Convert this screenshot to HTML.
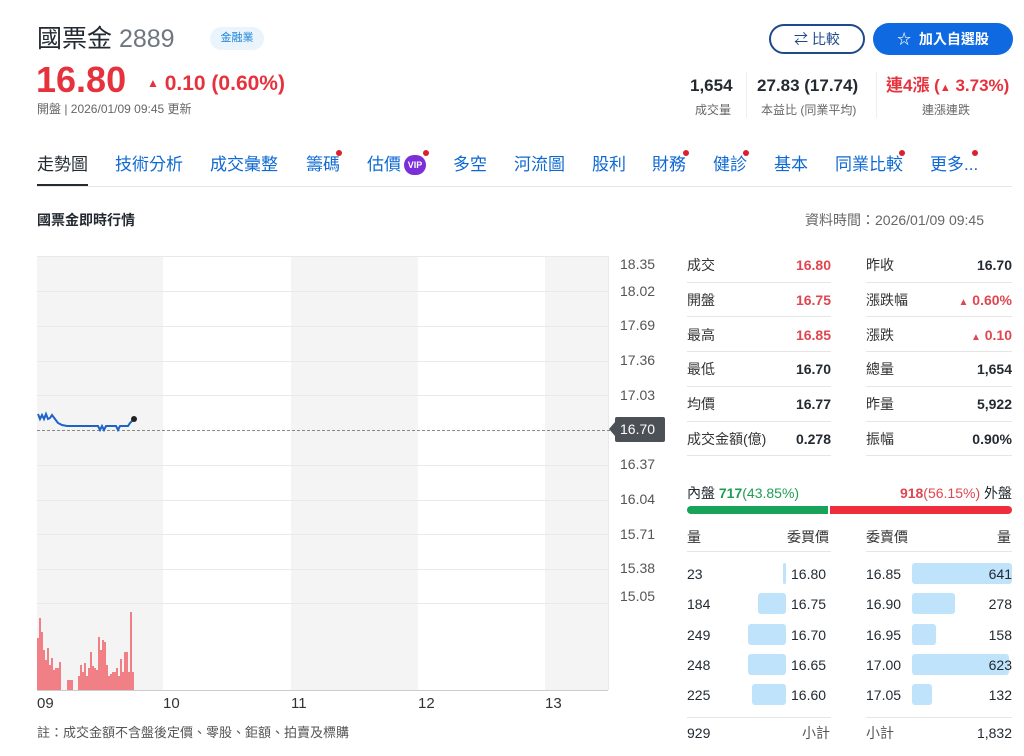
<!DOCTYPE html>
<html><head><meta charset="utf-8"><style>
*{margin:0;padding:0;box-sizing:border-box}
body{width:1024px;height:756px;background:#fff;font-family:"Liberation Sans","Noto Sans CJK TC",sans-serif;color:#232a31;position:relative;overflow:hidden}
.a{position:absolute;white-space:nowrap}
.rd{color:#e0464f}
.nav{color:#0f69d2;font-size:17px;top:153px;line-height:24px}
.dot{position:absolute;width:6px;height:6px;border-radius:3px;background:#d9212f}
.row{position:relative;height:34.8px;line-height:20px}
.lbl{font-size:14px;color:#333;line-height:20px}
.val{font-size:14px;font-weight:bold;text-align:right;line-height:20px}
.yl{font-size:14px;color:#555;left:620px;line-height:18px}
.sep{position:absolute;height:1px;background:#e6e6e6}
.bar{position:absolute;background:#bfe3fb;border-radius:3px}
.ob{font-size:14px;line-height:30.3px}
</style></head><body>
<div class="a" style="left:37px;top:22px;font-size:25px;line-height:34px;color:#232a31">國票金 <span style="color:#6e7780">2889</span></div>
<div class="a" style="left:210px;top:27px;width:54px;height:23px;border-radius:12px;background:#eaf4fd;color:#1b83d4;font-size:11px;text-align:center;line-height:23px">金融業</div>
<div class="a" style="left:36px;top:59px;font-size:36px;line-height:42px;font-weight:bold;color:#e5323c">16.80</div>
<div class="a" style="left:147px;top:70px;font-size:21px;line-height:28px;font-weight:bold;color:#e5323c"><span style="font-size:12px;position:relative;top:-3px">▲</span> 0.10 (0.60%)</div>
<div class="a" style="left:37px;top:101px;font-size:12px;line-height:16px;color:#666">開盤 | 2026/01/09 09:45 更新</div>

<div class="a" style="left:769px;top:24px;width:96px;height:30px;border:2px solid #1f4a8a;border-radius:16px;color:#1f4a8a;font-size:14px;line-height:26px;text-align:center">⇄ 比較</div>
<div class="a" style="left:873px;top:23px;width:140px;height:32px;border-radius:16px;background:#0f69e0;color:#fff;font-size:14px;font-weight:bold;line-height:32px;text-align:center">☆ &nbsp;加入自選股</div>

<div class="a" style="left:690px;top:75px;font-size:17px;line-height:22px;font-weight:bold">1,654</div>
<div class="a" style="left:695px;top:102px;font-size:12px;line-height:16px;color:#666">成交量</div>
<div class="a" style="left:746px;top:72px;width:1px;height:46px;background:#eee"></div>
<div class="a" style="left:757px;top:75px;font-size:17px;line-height:22px;font-weight:bold">27.83 (17.74)</div>
<div class="a" style="left:761px;top:102px;font-size:12px;line-height:16px;color:#666">本益比 (同業平均)</div>
<div class="a" style="left:876px;top:72px;width:1px;height:46px;background:#eee"></div>
<div class="a" style="left:886px;top:75px;font-size:17px;line-height:22px;font-weight:bold;color:#e5323c">連4漲 (<span style="font-size:11px">▲</span> 3.73%)</div>
<div class="a" style="left:922px;top:102px;font-size:12px;line-height:16px;color:#666">連漲連跌</div>

<div class="a nav" style="left:37px;color:#232a31">走勢圖</div>
<div class="a" style="left:37px;top:184px;width:51px;height:3px;background:#232a31"></div>
<div class="a" style="left:37px;top:186px;width:975px;height:1px;background:#e6e6e6"></div>
<div class="a nav" style="left:115px">技術分析</div>
<div class="a nav" style="left:210px">成交彙整</div>
<div class="a nav" style="left:306px">籌碼</div><div class="dot" style="left:336px;top:150px"></div>
<div class="a nav" style="left:367px">估價</div><div class="a" style="left:404px;top:155px;width:22px;height:20px;border-radius:10px;background:#7b2fd6;color:#fff;font-size:9px;font-weight:bold;line-height:20px;text-align:center">VIP</div><div class="dot" style="left:423px;top:150px"></div>
<div class="a nav" style="left:453px">多空</div>
<div class="a nav" style="left:514px">河流圖</div>
<div class="a nav" style="left:592px">股利</div>
<div class="a nav" style="left:652px">財務</div><div class="dot" style="left:683px;top:150px"></div>
<div class="a nav" style="left:713px">健診</div><div class="dot" style="left:743px;top:150px"></div>
<div class="a nav" style="left:774px">基本</div>
<div class="a nav" style="left:835px">同業比較</div><div class="dot" style="left:899px;top:150px"></div>
<div class="a nav" style="left:930px">更多...</div><div class="dot" style="left:972px;top:150px"></div>

<div class="a" style="left:37px;top:210px;font-size:14px;line-height:20px;font-weight:bold">國票金即時行情</div>
<div class="a" style="left:805px;top:210px;font-size:14px;line-height:20px;color:#666">資料時間：2026/01/09 09:45</div>

<svg class="a" style="left:0;top:240px" width="612" height="460">
<rect x="37" y="16" width="126" height="434" fill="#f4f4f4"/>
<rect x="291" y="16" width="127" height="434" fill="#f4f4f4"/>
<rect x="545" y="16" width="63" height="434" fill="#f4f4f4"/>
<g stroke="#e9e9e9" stroke-width="1">
<line x1="37" x2="608" y1="16.5" y2="16.5"/><line x1="37" x2="608" y1="51.5" y2="51.5"/><line x1="37" x2="608" y1="86.5" y2="86.5"/><line x1="37" x2="608" y1="121.5" y2="121.5"/><line x1="37" x2="608" y1="155.5" y2="155.5"/><line x1="37" x2="608" y1="225.5" y2="225.5"/><line x1="37" x2="608" y1="260.5" y2="260.5"/><line x1="37" x2="608" y1="294.5" y2="294.5"/><line x1="37" x2="608" y1="329.5" y2="329.5"/><line x1="37" x2="608" y1="363.5" y2="363.5"/>
<line x1="608.5" x2="608.5" y1="16" y2="450"/>
</g>
<line x1="37" x2="608" y1="450.5" y2="450.5" stroke="#ccc"/>
<line x1="37" x2="612" y1="190.5" y2="190.5" stroke="#888" stroke-dasharray="3,2"/>
<polyline fill="none" stroke="#1e63c8" stroke-width="2" points="38,174 40,179 42,175 44,179 46,174 48,179 50,178 52,175 55,179 58,183 62,185 67,186 98,186 100,190 102,186 104,190 106,186 116,186 118,190 120,186 128,186 130,183 134,179"/>
<circle cx="134" cy="179" r="3" fill="#222"/>
<g fill="#f07f86">
<rect x="37" y="398" width="2" height="52"/><rect x="39" y="378" width="2" height="72"/><rect x="41" y="392" width="2" height="58"/><rect x="43" y="410" width="2" height="40"/><rect x="45" y="420" width="2" height="30"/><rect x="47" y="408" width="2" height="42"/><rect x="49" y="425" width="2" height="25"/><rect x="51" y="418" width="2" height="32"/><rect x="53" y="430" width="2" height="20"/><rect x="55" y="428" width="2" height="22"/><rect x="57" y="428" width="2" height="22"/><rect x="59" y="422" width="2" height="28"/>
<rect x="67" y="440" width="6" height="10"/>
<rect x="78" y="436" width="2" height="14"/><rect x="80" y="425" width="2" height="25"/><rect x="82" y="432" width="2" height="18"/><rect x="84" y="423" width="2" height="27"/><rect x="86" y="436" width="2" height="14"/><rect x="88" y="428" width="2" height="22"/><rect x="90" y="412" width="2" height="38"/><rect x="92" y="426" width="2" height="24"/><rect x="94" y="428" width="2" height="22"/><rect x="96" y="430" width="2" height="20"/><rect x="98" y="397" width="2" height="53"/><rect x="100" y="410" width="2" height="40"/><rect x="102" y="400" width="2" height="50"/><rect x="104" y="402" width="2" height="48"/><rect x="106" y="425" width="2" height="25"/><rect x="108" y="436" width="2" height="14"/><rect x="110" y="434" width="2" height="16"/><rect x="112" y="432" width="2" height="18"/><rect x="114" y="432" width="2" height="18"/><rect x="116" y="428" width="2" height="22"/><rect x="118" y="436" width="2" height="14"/><rect x="120" y="419" width="2" height="31"/><rect x="122" y="432" width="2" height="18"/><rect x="124" y="412" width="2" height="38"/><rect x="126" y="412" width="2" height="38"/><rect x="128" y="432" width="2" height="18"/><rect x="130" y="372" width="2" height="78"/><rect x="132" y="432" width="2" height="18"/>
</g>
</svg>
<div class="a" style="left:37px;top:694px;font-size:15px;line-height:20px;color:#333">09</div>
<div class="a" style="left:163px;top:694px;font-size:15px;line-height:20px;color:#333">10</div>
<div class="a" style="left:291px;top:694px;font-size:15px;line-height:20px;color:#333">11</div>
<div class="a" style="left:418px;top:694px;font-size:15px;line-height:20px;color:#333">12</div>
<div class="a" style="left:545px;top:694px;font-size:15px;line-height:20px;color:#333">13</div>
<div class="a" style="left:37px;top:724px;font-size:13px;line-height:18px;color:#555">註：成交金額不含盤後定價、零股、鉅額、拍賣及標購</div>

<div class="a yl" style="top:255px">18.35</div>
<div class="a yl" style="top:282px">18.02</div>
<div class="a yl" style="top:316px">17.69</div>
<div class="a yl" style="top:351px">17.36</div>
<div class="a yl" style="top:386px">17.03</div>
<div class="a" style="left:609px;top:422px;width:0;height:0;border-top:7px solid transparent;border-bottom:7px solid transparent;border-right:6px solid #4b5157"></div>
<div class="a" style="left:615px;top:417px;width:50px;height:25px;background:#4b5157;color:#fff;font-size:14px;line-height:25px;padding-left:5px;border-radius:2px">16.70</div>
<div class="a yl" style="top:455px">16.37</div>
<div class="a yl" style="top:490px">16.04</div>
<div class="a yl" style="top:525px">15.71</div>
<div class="a yl" style="top:559px">15.38</div>
<div class="a yl" style="top:587px">15.05</div>

<div class="a" style="left:687px;top:255px;width:144px">
<div class="row"><span class="a lbl" style="left:0;top:0">成交</span><span class="a val rd" style="right:0;top:0">16.80</span></div>
<div class="row"><span class="a lbl" style="left:0;top:0">開盤</span><span class="a val rd" style="right:0;top:0">16.75</span></div>
<div class="row"><span class="a lbl" style="left:0;top:0">最高</span><span class="a val rd" style="right:0;top:0">16.85</span></div>
<div class="row"><span class="a lbl" style="left:0;top:0">最低</span><span class="a val" style="right:0;top:0">16.70</span></div>
<div class="row"><span class="a lbl" style="left:0;top:0">均價</span><span class="a val" style="right:0;top:0">16.77</span></div>
<div class="row"><span class="a lbl" style="left:0;top:0">成交金額(億)</span><span class="a val" style="right:0;top:0">0.278</span></div>
</div>
<div class="a" style="left:866px;top:255px;width:146px">
<div class="row"><span class="a lbl" style="left:0;top:0">昨收</span><span class="a val" style="right:0;top:0">16.70</span></div>
<div class="row"><span class="a lbl" style="left:0;top:0">漲跌幅</span><span class="a val rd" style="right:0;top:0"><span style="font-size:10px">▲</span> 0.60%</span></div>
<div class="row"><span class="a lbl" style="left:0;top:0">漲跌</span><span class="a val rd" style="right:0;top:0"><span style="font-size:10px">▲</span> 0.10</span></div>
<div class="row"><span class="a lbl" style="left:0;top:0">總量</span><span class="a val" style="right:0;top:0">1,654</span></div>
<div class="row"><span class="a lbl" style="left:0;top:0">昨量</span><span class="a val" style="right:0;top:0">5,922</span></div>
<div class="row"><span class="a lbl" style="left:0;top:0">振幅</span><span class="a val" style="right:0;top:0">0.90%</span></div>
</div>
<div class="sep" style="left:687px;top:282px;width:144px"></div><div class="sep" style="left:866px;top:282px;width:146px"></div>
<div class="sep" style="left:687px;top:316px;width:144px"></div><div class="sep" style="left:866px;top:316px;width:146px"></div>
<div class="sep" style="left:687px;top:351px;width:144px"></div><div class="sep" style="left:866px;top:351px;width:146px"></div>
<div class="sep" style="left:687px;top:386px;width:144px"></div><div class="sep" style="left:866px;top:386px;width:146px"></div>
<div class="sep" style="left:687px;top:421px;width:144px"></div><div class="sep" style="left:866px;top:421px;width:146px"></div>
<div class="sep" style="left:687px;top:455px;width:144px"></div><div class="sep" style="left:866px;top:455px;width:146px"></div>

<div class="a" style="left:687px;top:483px;font-size:14px;line-height:20px">內盤 <b style="color:#1f9d55">717</b><span style="color:#1f9d55">(43.85%)</span></div>
<div class="a" style="right:12px;top:483px;font-size:14px;line-height:20px"><b class="rd">918</b><span class="rd">(56.15%)</span> 外盤</div>
<div class="a" style="left:687px;top:506px;width:141px;height:8px;background:#17a45a;border-radius:4px 0 0 4px"></div>
<div class="a" style="left:830px;top:506px;width:182px;height:8px;background:#ee2e3c;border-radius:0 4px 4px 0"></div>

<div class="a lbl" style="left:687px;top:527px">量</div>
<div class="a lbl" style="left:787px;top:527px">委買價</div>
<div class="a lbl" style="left:866px;top:527px">委賣價</div>
<div class="a lbl" style="left:997px;top:527px">量</div>
<div class="sep" style="left:687px;top:551px;width:144px"></div><div class="sep" style="left:866px;top:551px;width:146px"></div>

<div class="bar" style="left:783px;top:563px;width:3px;height:21px"></div>
<div class="bar" style="left:758px;top:593px;width:28px;height:21px"></div>
<div class="bar" style="left:748px;top:624px;width:38px;height:21px"></div>
<div class="bar" style="left:748px;top:654px;width:38px;height:21px"></div>
<div class="bar" style="left:752px;top:684px;width:34px;height:21px"></div>
<div class="bar" style="left:912px;top:563px;width:100px;height:21px"></div>
<div class="bar" style="left:912px;top:593px;width:43px;height:21px"></div>
<div class="bar" style="left:912px;top:624px;width:24px;height:21px"></div>
<div class="bar" style="left:912px;top:654px;width:97px;height:21px"></div>
<div class="bar" style="left:912px;top:684px;width:20px;height:21px"></div>

<div class="a ob" style="left:687px;top:559px">23<br>184<br>249<br>248<br>225</div>
<div class="a ob" style="left:791px;top:559px">16.80<br>16.75<br>16.70<br>16.65<br>16.60</div>
<div class="a ob" style="left:866px;top:559px">16.85<br>16.90<br>16.95<br>17.00<br>17.05</div>
<div class="a ob" style="right:12px;top:559px;text-align:right">641<br>278<br>158<br>623<br>132</div>

<div class="sep" style="left:687px;top:717px;width:144px"></div><div class="sep" style="left:866px;top:717px;width:146px"></div>
<div class="a" style="left:687px;top:723px;font-size:14px;line-height:20px">929</div>
<div class="a lbl" style="left:802px;top:723px;color:#555">小計</div>
<div class="a lbl" style="left:866px;top:723px;color:#555">小計</div>
<div class="a" style="right:12px;top:723px;font-size:14px;line-height:20px">1,832</div>
</body></html>
